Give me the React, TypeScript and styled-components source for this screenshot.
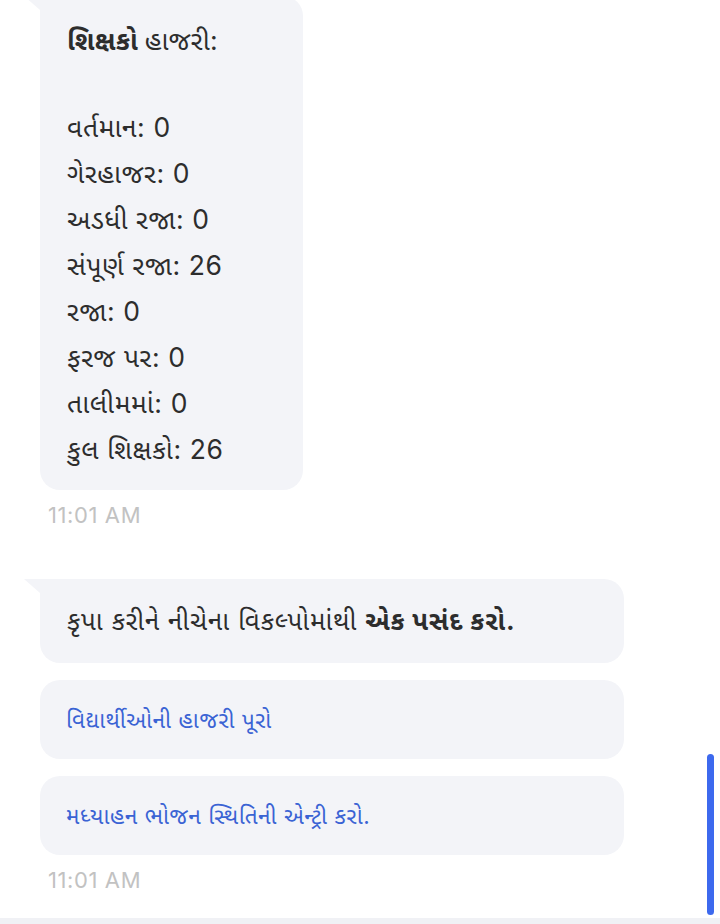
import React from 'react';
import styled, { createGlobalStyle } from 'styled-components';

const GlobalStyle = createGlobalStyle`
  html, body {
    margin: 0;
    padding: 0;
    background: #ffffff;
  }
  body {
    font-family: "Inter", "Noto Sans Gujarati", "Noto Sans", "Lohit Gujarati", sans-serif;
    color: #2d2d2d;
  }
`;

const Page = styled.div`
  position: relative;
  width: 720px;
  height: 924px;
  display: flex;
  flex-direction: column;
  overflow: hidden;
  background: #ffffff;
`;

const Messages = styled.div`
  flex: 1;
  display: flex;
  flex-direction: column;
  align-items: flex-start;
  padding: 0 0 0 40px;
  margin-top: -4px;
`;

const Bubble = styled.div<{ $wide?: boolean; $tail?: boolean }>`
  position: relative;
  box-sizing: border-box;
  width: ${(p) => (p.$wide ? '584px' : 'auto')};
  background: #f3f4f8;
  border-radius: ${(p) => (p.$tail ? '0 20px 20px 20px' : '20px')};
  letter-spacing: 0.4px;

  &::before {
    content: '';
    display: ${(p) => (p.$tail ? 'block' : 'none')};
    position: absolute;
    left: -16px;
    top: 0;
    width: 0;
    height: 0;
    border-top: 14px solid #f3f4f8;
    border-left: 16px solid transparent;
  }
`;

const StatsBubble = styled(Bubble)`
  padding: 21px 80px 18px 27px;
  font-size: 26.5px;
  letter-spacing: 0.6px;
`;

const Title = styled.div`
  line-height: 46px;
  font-weight: 700;
  letter-spacing: 0.3px;

  span {
    font-weight: 400;
  }
`;

const StatList = styled.div`
  margin-top: 41px;
`;

const StatLine = styled.div`
  line-height: 46px;
  white-space: nowrap;
`;

const PromptBubble = styled(Bubble)`
  padding: 21px 27px 21px 27px;
  margin-top: 49px;
  font-size: 26px;
  line-height: 42px;
  letter-spacing: 0.8px;

  b {
    font-weight: 700;
  }
`;

const OptionBubble = styled(Bubble)`
  padding: 19px 26px;
  margin-top: 17px;
  font-size: 22.5px;
  line-height: 41px;
  letter-spacing: 0.6px;
  color: #3a63d4;
  cursor: pointer;
`;

const Time = styled.div`
  margin: 10px 0 0 8px;
  font-family: "Inter", sans-serif;
  font-size: 22px;
  line-height: 30px;
  color: #c2c2c2;
  letter-spacing: 0.6px;
`;

const Footer = styled.div`
  height: 6px;
  background: #f0f1f5;
`;

const ScrollThumb = styled.div`
  position: absolute;
  right: 6px;
  top: 754px;
  width: 7px;
  height: 161px;
  border-radius: 4px;
  background: #3d69ee;
`;

const stats: [string, number][] = [
  ['વર્તમાન', 0],
  ['ગેરહાજર', 0],
  ['અડધી રજા', 0],
  ['સંપૂર્ણ રજા', 26],
  ['રજા', 0],
  ['ફરજ પર', 0],
  ['તાલીમમાં', 0],
  ['કુલ શિક્ષકો', 26],
];

const options = ['વિદ્યાર્થીઓની હાજરી પૂરો', 'મધ્યાહન ભોજન સ્થિતિની એન્ટ્રી કરો.'];

function App() {
  return (
    <Page>
      <GlobalStyle />
      <Messages>
        <StatsBubble $tail>
          <Title>
            શિક્ષકો <span>હાજરી:</span>
          </Title>
          <StatList>
            {stats.map(([label, value]) => (
              <StatLine key={label}>
                {label}: {value}
              </StatLine>
            ))}
          </StatList>
        </StatsBubble>
        <Time>11:01 AM</Time>

        <PromptBubble $wide $tail>
          કૃપા કરીને નીચેના વિકલ્પોમાંથી <b>એક પસંદ કરો.</b>
        </PromptBubble>
        {options.map((o) => (
          <OptionBubble $wide key={o}>
            {o}
          </OptionBubble>
        ))}
        <Time>11:01 AM</Time>
      </Messages>
      <Footer />
      <ScrollThumb />
    </Page>
  );
}

export default App;
